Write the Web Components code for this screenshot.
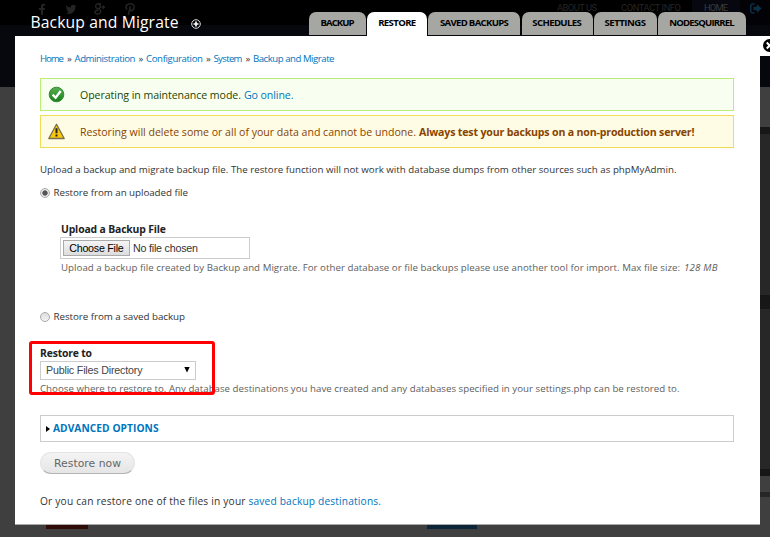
<!DOCTYPE html>
<html lang="en">
<head>
<meta charset="utf-8">
<title>Backup and Migrate</title>
<style>
html,body{margin:0;height:100%;overflow:hidden}
body{font-family:"Open Sans","Noto Sans",sans-serif;color:#333}
a{color:#0074bd;text-decoration:none}
b,.em{color:#840}
</style>
</head>
<body>
<site-page>
  <site-backdrop slot="back"></site-backdrop>
  <overlay-header slot="head" heading="Backup and Migrate">
    <nav-tab style="--w:57px"><fit-text w="34">BACKUP</fit-text></nav-tab>
    <nav-tab active style="--w:60px"><fit-text w="38">RESTORE</fit-text></nav-tab>
    <nav-tab style="--w:92px"><fit-text w="69">SAVED BACKUPS</fit-text></nav-tab>
    <nav-tab style="--w:71px"><fit-text w="49.5">SCHEDULES</fit-text></nav-tab>
    <nav-tab style="--w:63px"><fit-text w="41.5">SETTINGS</fit-text></nav-tab>
    <nav-tab style="--w:88px"><fit-text w="65.5">NODESQUIRREL</fit-text></nav-tab>
  </overlay-header>
  <overlay-panel>
    <text-row style="--top:16px;--size:9.6px;--line:14px">
      <a href="#"><fit-text w="24">Home</fit-text></a><fit-text w="4.5">»</fit-text><a href="#"><fit-text w="61">Administration</fit-text></a><fit-text w="4.5">»</fit-text><a href="#"><fit-text w="57">Configuration</fit-text></a><fit-text w="4.5">»</fit-text><a href="#"><fit-text w="29">System</fit-text></a><fit-text w="4.5">»</fit-text><a href="#"><fit-text w="81.500">Backup and Migrate</fit-text></a>
    </text-row>
    <message-box kind="status" style="--top:14px"><fit-text w="161">Operating in maintenance mode.</fit-text><a href="#"><fit-text w="49.5">Go online.</fit-text></a></message-box>
    <message-box kind="warning" style="--top:4px"><fit-text w="336">Restoring will delete some or all of your data and cannot be undone.</fit-text><b><fit-text w="275.500">Always test your backups on a non-production server!</fit-text></b></message-box>
    <text-row style="--top:15px;--size:9.7px;--line:14px"><fit-text w="636.500">Upload a backup and migrate backup file. The restore function will not work with database dumps from other sources such as phpMyAdmin.</fit-text></text-row>
    <radio-option checked style="--top:11px"><fit-text w="134.5">Restore from an uploaded file</fit-text></radio-option>
    <text-row strong style="--top:25px;--indent:21px"><fit-text w="105">Upload a Backup File</fit-text></text-row>
    <file-input></file-input>
    <text-row dim style="--top:2px;--indent:21px;--size:9.7px;--line:14px"><fit-text w="619">Upload a backup file created by Backup and Migrate. For other database or file backups please use another tool for import. Max file size:</fit-text><i style="margin-left:1px"><fit-text w="33.500">128 MB</fit-text></i></text-row>
    <radio-option style="--top:37px"><fit-text w="131.5">Restore from a saved backup</fit-text></radio-option>
    <restore-target></restore-target>
    <text-row dim style="--top:2px;--size:9.7px;--line:14px"><fit-text w="639.5">Choose where to restore to. Any database destinations you have created and any databases specified in your settings.php can be restored to.</fit-text></text-row>
    <collapsed-fieldset><fit-text w="105.5">ADVANCED OPTIONS</fit-text></collapsed-fieldset>
    <pill-button><fit-text w="67">Restore now</fit-text></pill-button>
    <text-row style="--top:21px;--size:10.2px;--line:13px"><fit-text w="205.500">Or you can restore one of the files in your</fit-text><a href="#"><fit-text w="132.5">saved backup destinations.</fit-text></a></text-row>
  </overlay-panel>
</site-page>
<script>
const define = (name, html, setup) => customElements.define(name, class extends HTMLElement {
  connectedCallback() {
    if (this.shadowRoot) return;
    const t = document.createElement('template');
    t.innerHTML = html;
    this.attachShadow({mode: 'open'}).append(t.content.cloneNode(true));
    if (setup) setup(this, this.shadowRoot);
  }
});

define('site-page', `<style>
:host{display:grid;grid-template:537px/770px;position:relative;overflow:hidden}
::slotted([slot=back]),main{grid-area:1/1}
main{display:flex;flex-direction:column;position:relative}
</style><slot name="back"></slot><main><slot name="head"></slot><slot></slot></main>`);

define('site-backdrop', `<style>
:host{display:flex;flex-direction:column;justify-content:space-between;color:#252525;
background:
 linear-gradient(#07080d 87px,#3f3f3f 0 127px,#171717 0 134px,#272727 0 295px,#171717 0 309px,#272727 0 469px,#171717 0 476px,#3f3f3f 0 492px,#262626 0 497px,#3f3f3f 0) right/10px 100% no-repeat,
 linear-gradient(#07080d 87px,#3f3f3f 0)}
header{height:25px;background:#000;display:flex;align-items:flex-start;font:9.3px/16px Roboto,sans-serif}
.social{display:flex;align-items:center;gap:16px;padding:3px 0 0 36px;flex:1}
svg{display:block;overflow:visible}
.home{background:#07080f;color:#3a3a3a;height:25px;width:48px;display:flex;justify-content:center;margin-left:11px}
.out{width:29px;display:flex;justify-content:center;height:25px;background:#030307;padding-left:1px}
nav{display:flex;height:25px;align-items:flex-start}
nav fit-text+fit-text{margin-left:24px}
footer{display:flex;height:12px;padding-left:46px;gap:339px}
footer i{height:4px;width:42px;background:#300c09}footer i+i{width:50px;background:#0b2538}
</style><header><div class="social">
<svg width="12" height="12" viewBox="0 0 12 12" fill="#242424"><path d="M5 12V7H3V5h2V3.5C5 1.6 6 .8 7.5.8H9v2H8c-.7 0-.9.3-.9.9V5H9l-.3 2H7.1v5z"/></svg>
<svg width="12" height="12" viewBox="0 0 12 12" fill="#242424" style="margin-left:1px"><path d="M1 2.3c1.4 1.5 2.800 2.200 4.800 2.300C5.500 2.200 7.900 1 9.500 2.500l1.500-.6-.8 1.300 1.200-.3-1.100 1.200C10.200 10 5.200 12.500 1 10c1.300 0 2.200-.2 3.100-.9C3 9 2.300 8.400 2 7.500h1C1.800 7 1.200 6.200 1.200 5.100l1 .2C1.100 4.500.7 3.400 1 2.300z"/></svg>
<svg width="14" height="12" viewBox="0 0 14 12" fill="none" stroke="#242424" stroke-width="1.400" style="margin-left:1px"><ellipse cx="4" cy="3.300" rx="2.300" ry="2.400"/><path d="M4 .7h3M5 5.700c3 2 2 5.300-1.500 5.300S0 7.300 4.500 7.300M7.500 4.300h3.500M9.300 2.500v3.600"/></svg>
<svg width="12" height="12" viewBox="0 0 12 12" fill="none" stroke="#242424" stroke-width="1.500"><path d="M3 6.500C.5 3 3.500.8 6.300.8 9.500.8 10.500 3 10 5 9.500 7.500 6.500 8.500 5.700 6.800M6.500 3.200 4.300 12"/></svg>
</div><nav><fit-text w="40">ABOUT US</fit-text><fit-text w="60">CONTACT INFO</fit-text><span class="home"><fit-text w="24">HOME</fit-text></span><span class="out"><svg style="margin-top:3px" width="12" height="11" viewBox="0 0 12 11"><path d="M4.500 1H2.500Q.8 1 .8 2.700v5.600Q.8 10 2.500 10h2" fill="none" stroke="#0b3045" stroke-width="1.500"/><path d="M3.500 3.800H7V1.300l4.500 4.200L7 9.700V7.200H3.500z" fill="#0b3045"/></svg></span></nav></header>
<footer><i></i><i></i></footer>`);

define('overlay-header', `<style>
:host{display:flex;height:36px;align-items:flex-end;padding-left:30.500px;color:#fff}
h1{font-size:15.700px;font-weight:400;line-height:20px;margin:0;width:278.500px;height:24px;display:flex;gap:12px}
h1 svg{margin-top:7px}
nav{display:flex;gap:1.200px;height:24px}
</style><h1><fit-text w="148"></fit-text><svg width="10" height="10" viewBox="0 0 10 10" fill="none"><circle cx="5" cy="5" r="4.300" stroke="#ddd" stroke-width="1"/><path d="M2.500 5h5M5 2.500v5" stroke="#fff" stroke-width="1.700"/></svg></h1><nav><slot></slot></nav>`,
(el, root) => { root.querySelector('fit-text').textContent = el.getAttribute('heading'); });

define('nav-tab', `<style>
:host{display:flex;width:var(--w);height:23px;box-sizing:border-box;justify-content:center;background:#a6a7a2;color:#000;border-radius:7px 7px 0 0;font-size:9.600px;font-weight:700;line-height:21px}
:host([active]){background:#fff;height:24px}
</style><slot></slot>`);

define('overlay-panel', `<style>
:host{display:grid;grid-template-columns:745px 10px;margin-left:15px}
section{display:flex;flex-direction:column;height:489px;background:#fff;padding:0 25px;box-sizing:border-box;border-bottom:1px solid #aaa}
.close{background:#fff;height:20px;overflow:hidden}
svg{display:block;margin:3px 0 0 3px}
</style><section><slot></slot></section><div class="close"><svg width="13" height="13" viewBox="0 0 13 13"><circle cx="6.500" cy="6.500" r="6.500"/><path d="m3.800 3.500 5.500 6M9.300 3.500l-5.500 6" stroke="#fff" stroke-width="2"/></svg></div>`);

define('text-row', `<style>
:host{display:flex;gap:3px;height:12px;line-height:var(--line,12px);margin-top:var(--top);padding-left:var(--indent,0);font-size:var(--size,10.400px)}
:host([strong]){font-weight:700;color:#222}
:host([dim]){color:#606060}
</style><slot></slot>`);

define('message-box', `<style>
:host{display:flex;align-items:center;box-sizing:border-box;width:694px;height:33px;margin-top:var(--top);border:1.500px solid #be7;background:#f8fff0;color:#234600;font-size:10.600px;line-height:14px;padding-left:7px}
:host([kind=warning]){border-color:#ed5;background:#fffce5;color:#840}
svg{flex:none;margin-right:15px}
.body{display:flex;gap:3px}
:host([kind=warning]) .ok,:host([kind=status]) .warn{display:none}
</style>
<svg class="ok" width="17" height="17" viewBox="0 0 17 17"><defs><linearGradient id="g" x2="0" y2="1"><stop stop-color="#5cae53"/><stop offset="1" stop-color="#168018"/></linearGradient></defs><circle cx="8.500" cy="8.500" r="7.300" fill="url(#g)" stroke="#2f8a32"/><path d="m4.600 8.600 3 3.200L12.700 5" fill="none" stroke="#fff" stroke-width="2.300"/></svg>
<svg class="warn" width="17" height="17" viewBox="0 0 17 17"><path d="M8.500 1.200 16.200 15.500H.8z" fill="#fac70d" stroke="#76704e" stroke-width="1.300" stroke-linejoin="round"/><path d="M8.500 5.200v5M8.500 11.600v2" stroke="#222" stroke-width="2"/></svg>
<div class="body"><slot></slot></div>`);

define('radio-option', `<style>
:host{display:flex;gap:3.500px;align-items:center;height:13px;line-height:13px;margin-top:var(--top);margin-bottom:-1px;font-size:9.800px}
i{box-sizing:border-box;width:10px;height:10px;border:1px solid #aaa;border-radius:50%;background:linear-gradient(#ddd,#f2f2f2)}
:host([checked]) i{background:radial-gradient(circle,#555 0 2.300px,#e6e6e6 3px)}
</style><i></i><slot></slot>`);

define('file-input', `<style>
:host{display:flex;align-items:center;box-sizing:border-box;width:190px;height:22px;margin:2px 0 0 20px;border:1px solid #ccc;padding-left:2px;gap:3px;font:10.700px/14px "Liberation Sans",Arial,sans-serif;color:#333}
span{box-sizing:border-box;width:67px;height:16px;border:1px solid #aaa;background:linear-gradient(#f4f4f4,#ddd);display:flex;justify-content:center;color:#000}
</style><span><fit-text w="54.500">Choose File</fit-text></span><fit-text w="65">No file chosen</fit-text>`);

define('restore-target', `<style>
:host{display:block;position:relative;margin-top:25px}
.select{display:flex;align-items:center;justify-content:space-between;box-sizing:border-box;width:156px;height:19px;margin-top:2px;border:1px solid #ccc;padding:0 5px 1px;font:10.700px/14px "Liberation Sans",Arial,sans-serif;color:#444}
.mark{position:absolute;left:-11px;top:-6px;width:186px;height:54px;box-sizing:border-box;border:3px solid #f00;border-radius:3px;z-index:1}
</style><text-row strong style="--top:0px;--line:13px"><fit-text w="52">Restore to</fit-text></text-row>
<div class="select"><fit-text w="96.500">Public Files Directory</fit-text><svg width="6" height="6"><path d="M.3 0h5.400L3 5.500z"/></svg></div><div class="mark"></div>`);

define('collapsed-fieldset', `<style>
:host{display:flex;align-items:center;box-sizing:border-box;width:694px;height:27px;margin:21px 0 1px;border:1px solid #ccc;padding:0 0 1px 5px;gap:3px;font-size:10.200px;line-height:12px;font-weight:700;color:#0074bd}
</style><svg width="4" height="6" style="margin-top:2px"><path d="M0 0l4 3-4 3z"/></svg><slot></slot>`);

define('pill-button', `<style>
:host{display:flex;align-items:center;justify-content:center;box-sizing:border-box;width:95px;height:22px;margin-top:9px;border:1px solid #e4e4e4;border-bottom-color:#b4b4b4;border-radius:11px;background:linear-gradient(#f4f4f4,#e5e5e5);font:10.800px/14px "DejaVu Sans",sans-serif;color:#666;padding-top:1px}
</style><slot></slot>`);

/* Single-line label whose letter spacing is tuned to a given width. */
define('fit-text', `<style>:host{display:inline-block;white-space:nowrap;flex:none}</style><slot></slot>`, el => {
  const w = +el.getAttribute('w'), n = el.textContent.length;
  const natural = el.getBoundingClientRect().width;
  if (n > 1) { el.style.letterSpacing = (w - natural) / (n - 1) + 'px'; }
  el.style.width = w + 'px';
});
</script>
</body>
</html>
